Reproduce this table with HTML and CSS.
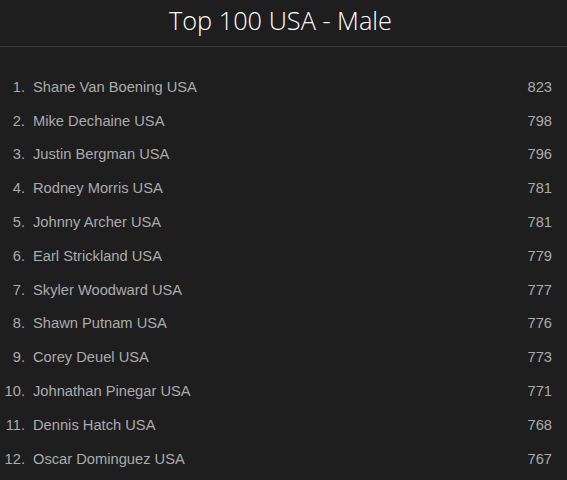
FILE: index.html
```html
<!DOCTYPE html>
<html>
<head>
<meta charset="utf-8">
<link rel="stylesheet" href="styles.css">
</head>
<body>
<div class="page">
  <header class="header"><h1 class="title">Top 100 USA - Male</h1></header>
  <ol class="ranking">
    <li class="row"><span class="rank">1.</span><span class="name">Shane Van Boening USA</span><span class="score">823</span></li>
    <li class="row"><span class="rank">2.</span><span class="name">Mike Dechaine USA</span><span class="score">798</span></li>
    <li class="row"><span class="rank">3.</span><span class="name">Justin Bergman USA</span><span class="score">796</span></li>
    <li class="row"><span class="rank">4.</span><span class="name">Rodney Morris USA</span><span class="score">781</span></li>
    <li class="row"><span class="rank">5.</span><span class="name">Johnny Archer USA</span><span class="score">781</span></li>
    <li class="row"><span class="rank">6.</span><span class="name">Earl Strickland USA</span><span class="score">779</span></li>
    <li class="row"><span class="rank">7.</span><span class="name">Skyler Woodward USA</span><span class="score">777</span></li>
    <li class="row"><span class="rank">8.</span><span class="name">Shawn Putnam USA</span><span class="score">776</span></li>
    <li class="row"><span class="rank">9.</span><span class="name">Corey Deuel USA</span><span class="score">773</span></li>
    <li class="row"><span class="rank">10.</span><span class="name">Johnathan Pinegar USA</span><span class="score">771</span></li>
    <li class="row"><span class="rank">11.</span><span class="name">Dennis Hatch USA</span><span class="score">768</span></li>
    <li class="row"><span class="rank">12.</span><span class="name">Oscar Dominguez USA</span><span class="score">767</span></li>
  </ol>
</div>
</body>
</html>
```

FILE: styles.css
```css
html, body {
  margin: 0;
  padding: 0;
  background: #1e1e1e;
  height: 100%;
  overflow: hidden;
}
.page {
  background: #1e1e1e;
}
.header {
  height: 46px;
  border-bottom: 1px solid #3a3a3a;
  display: flex;
  align-items: center;
  justify-content: center;
  padding-right: 6px;
}
.title {
  margin: 0;
  font-family: "Open Sans", sans-serif;
  font-weight: 300;
  font-size: 25.3px;
  color: #ffffff;
  line-height: 1;
  padding-bottom: 4px;
}
.ranking {
  list-style: none;
  margin: 0;
  padding: 23px 15px 0 0;
}
.row {
  display: flex;
  align-items: center;
  height: 33.8px;
  font-family: "Liberation Sans", Arial, sans-serif;
  font-size: 14.7px;
  color: #ababab;
}
.rank {
  width: 25px;
  text-align: right;
  margin-right: 8px;
}
.name {
  flex: 1;
}
.score {
  text-align: right;
}
```
